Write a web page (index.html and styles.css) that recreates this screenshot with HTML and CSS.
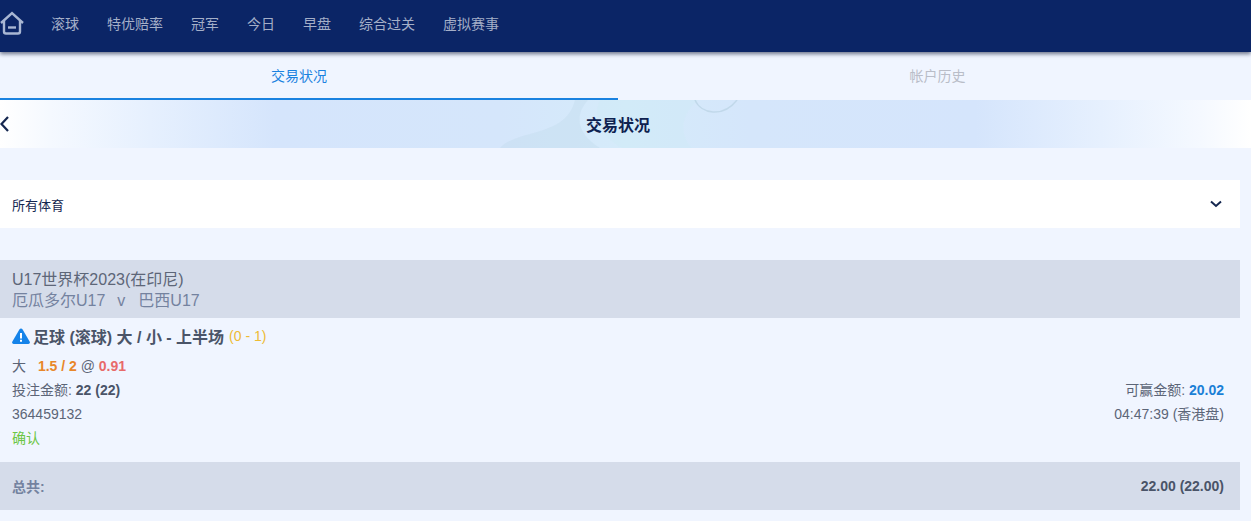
FILE: index.html
```html
<!DOCTYPE html>
<html lang="zh">
  <head>
    <meta charset="UTF-8" />
    <meta name="viewport" content="width=device-width, initial-scale=1.0" />
    <title>交易状况</title>
    <link rel="stylesheet" href="styles.css">
  </head>
  <body>
    <!-- top navigation -->
    <nav class="topnav">
      <a class="home" href="#" aria-label="home">
        <svg width="24" height="24" viewBox="0 0 24 24" fill="none" stroke="#a9b7d3" stroke-width="2.400">
          <path d="M1 12 12 2l11 10" />
          <path d="M4 10v10.500q0 2 2 2h12q2 0 2-2V10" />
          <path d="M8 16.500h8" />
        </svg>
      </a>
      <a href="#">滚球</a>
      <a href="#">特优赔率</a>
      <a href="#">冠军</a>
      <a href="#">今日</a>
      <a href="#">早盘</a>
      <a href="#">综合过关</a>
      <a href="#">虚拟赛事</a>
    </nav>

    <!-- tabs -->
    <div class="tabs">
      <a class="tab active" href="#">交易状况</a>
      <a class="tab" href="#">帐户历史</a>
    </div>

    <!-- page title -->
    <div class="title-band">
      <svg class="band-art" width="280" height="48" viewBox="0 0 280 48">
        <path d="M75 0C70 18 60 26 30 34 15 38 5 42 0 48h100C80 36 72 18 88 0Z" fill="#b9d3e4" opacity=".25" />
        <path d="M100 0c-8 18 0 36 22 48h70c-14-16-10-34 6-48Z" fill="#cdeaf6" opacity=".3" />
        <path d="M195 0c6 14 28 18 42 0" fill="none" stroke="#b4cfdf" stroke-width="1.500" opacity=".6" />
      </svg>
      <a class="back" href="#" aria-label="back">
        <svg width="10" height="16" viewBox="0 0 10 16" fill="none" stroke="#14264f" stroke-width="2.200">
          <path d="M8 1 1.500 8 8 15" />
        </svg>
      </a>
      <h1>交易状况</h1>
    </div>

    <main class="content">
      <div class="select-box">
        <span>所有体育</span>
        <svg width="12" height="8" viewBox="0 0 12 8" fill="none" stroke="#14264f" stroke-width="2">
          <path d="M1 1.500 6 6l5-4.500" />
        </svg>
      </div>

      <section class="bet-group">
        <div class="league">
          <div>U17世界杯2023(在印尼)</div>
          <div class="match">厄瓜多尔U17<span class="vs">v</span>巴西U17</div>
        </div>

        <div class="bet">
          <div class="bet-title">
            <svg width="18" height="16" viewBox="0 0 18 16">
              <path d="M9 .5q1 0 1.600 1l7 12q.9 2-1.200 2.500H1.600q-2.100-.5-1.200-2.500l7-12Q8 .5 9 .5Z" fill="#1583e9" />
              <path d="M8 5h2v5.500H8zM8 11.800h2v2H8z" fill="#fff" />
            </svg>
            <strong>足球 (滚球) 大 / 小 - 上半场</strong>
            <span class="score">(0 - 1)</span>
          </div>
          <div class="row">
            <span>大 <b class="line">1.5 / 2</b> @ <b class="odds">0.91</b></span>
          </div>
          <div class="row">
            <span>投注金额: <b>22 (22)</b></span>
            <span>可赢金额: <b class="win">20.02</b></span>
          </div>
          <div class="row">
            <span>364459132</span>
            <span>04:47:39 (香港盘)</span>
          </div>
          <div class="row confirm">确认</div>
        </div>

        <div class="total">
          <span class="total-label">总共:</span>
          <span>22.00 (22.00)</span>
        </div>
      </section>
    </main>
  </body>
</html>
```

FILE: styles.css
```css
* {
  box-sizing: border-box;
}

body {
  margin: 0;
  background: #f0f5ff;
  color: #5c6577;
  font-family: "Liberation Sans", "Noto Sans CJK SC", sans-serif;
  font-size: 14px;
  overflow: hidden;
}

a {
  color: inherit;
  text-decoration: none;
}

b,
strong {
  color: #4a5468;
}

/* top navigation */
.topnav {
  display: flex;
  align-items: center;
  gap: 28px;
  height: 52px;
  padding-bottom: 6px;
  background: #0b2566;
  color: #a4afc8;
  box-shadow: 0 2px 4px rgba(20, 30, 60, 0.6);
  position: relative;
}

.home {
  display: flex;
  width: 24px;
  margin-right: -1px;
}

/* tabs */
.tabs {
  display: flex;
  height: 48px;
}

.tab {
  flex: 1;
  line-height: 48px;
  text-align: center;
  color: #b9bdc8;
  padding-left: 6px;
}

.tab.active {
  flex: 0 0 618px;
  color: #1a82e0;
  padding: 0 20px 0 0;
  border-bottom: 2px solid #1a82e0;
}

/* page title */
.title-band {
  position: relative;
  display: flex;
  align-items: center;
  justify-content: center;
  height: 48px;
  padding-right: 15px;
  background: linear-gradient(90deg, #fff 0%, #f5f9ff 4%, #e6f0fe 12%, #d5e5fc 22%, #d5e6fb 40%, #d5ebfa 50%, #d5e6fb 60%, #d5e5fc 78%, #e6f0fe 88%, #f5f9ff 96%, #fff 100%);
}

.band-art {
  position: absolute;
  top: 0;
  left: 500px;
}

.back {
  position: absolute;
  left: 0;
  top: 16px;
  display: flex;
}

.title-band h1 {
  position: relative;
  margin: 0;
  font-size: 16px;
  font-weight: bold;
  color: #0e2250;
}

/* content */
.content {
  width: 1240px;
  padding-top: 32px;
}

.select-box {
  display: flex;
  align-items: center;
  justify-content: space-between;
  height: 48px;
  padding: 0 18px 0 12px;
  background: #fff;
  color: #14264f;
  font-size: 13px;
}

.bet-group {
  margin-top: 32px;
}

.league {
  height: 58px;
  padding: 9px 12px 0;
  background: #d5dcea;
  font-size: 16px;
  line-height: 21px;
  color: #5d6678;
}

.match {
  color: #74829f;
}

.vs {
  margin: 0 13px 0 12px;
}

.bet {
  height: 144px;
  padding: 6px 16px 0 12px;
}

.bet-title {
  display: flex;
  align-items: center;
  gap: 3px;
  height: 24px;
  margin-bottom: 6px;
  font-size: 16px;
}

.score {
  font-size: 14px;
  color: #eebb33;
  margin-left: 2px;
}

.row {
  display: flex;
  justify-content: space-between;
  height: 24px;
  line-height: 24px;
}

.line {
  margin-left: 8px;
  color: #e8872a;
}

.odds {
  color: #e86a6a;
}

.win {
  color: #1a7fd6;
}

.confirm {
  color: #6cc644;
}

.total {
  display: flex;
  align-items: center;
  justify-content: space-between;
  height: 48px;
  padding: 0 16px 0 12px;
  background: #d5dcea;
  font-weight: bold;
  color: #4a5468;
}

.total-label {
  color: #74829f;
}
```
